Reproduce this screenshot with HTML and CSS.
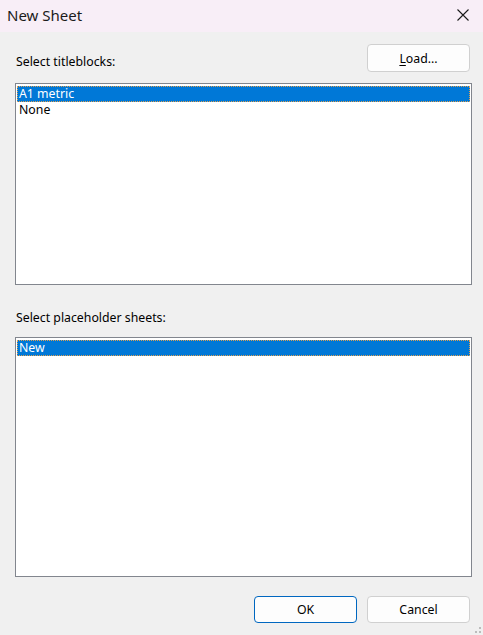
FILE: index.html
```html
<!DOCTYPE html>
<html>
<head>
<meta charset="utf-8">
<link rel="stylesheet" href="styles.css">
</head>
<body>
<div class="window">
  <div class="titlebar">
    <span class="title">New Sheet</span>
    <svg class="close" width="12" height="12" viewBox="0 0 12 12"><path d="M0.5 0.5 L11.5 11.5 M11.5 0.5 L0.5 11.5" stroke="#1a1a1a" stroke-width="1.1" fill="none"/></svg>
  </div>
  <div class="content">
    <div class="top-row">
      <span class="label">Select titleblocks:</span>
      <button class="btn load"><u>L</u>oad...</button>
    </div>
    <div class="list list-tb">
      <div class="item selected">A1 metric</div>
      <div class="item">None</div>
    </div>
    <div class="label label2">Select placeholder sheets:</div>
    <div class="list list-ph">
      <div class="item selected">New</div>
    </div>
    <div class="bottom-row">
      <button class="btn ok">OK</button>
      <button class="btn">Cancel</button>
    </div>
  </div>
  <div class="grip">
    <span class="dot d1"></span><span class="dot d2"></span><span class="dot d3"></span>
  </div>
</div>
</body>
</html>
```
FILE: styles.css
```css
html, body {
  margin: 0;
  padding: 0;
}
body {
  width: 483px;
  height: 635px;
  background: #f0f0f0;
  font-family: "Noto Sans", "Open Sans", sans-serif;
  font-size: 12.3px;
  color: #000;
  overflow: hidden;
}
.window {
  position: relative;
  height: 635px;
}
.titlebar {
  height: 32px;
  background: #f8eef7;
  display: flex;
  align-items: center;
  justify-content: space-between;
  padding: 0 14px 0 7px;
}
.title {
  font-size: 15px;
  color: #1b1b1b;
  padding-bottom: 3px;
}
.close {
  display: block;
  margin-bottom: 3px;
}
.content {
  padding: 12px 11px 0 15px;
}
.top-row {
  display: flex;
  justify-content: space-between;
  align-items: center;
  height: 28px;
}
.label {
  line-height: 16px;
  padding-top: 8px;
  padding-left: 1px;
}
.btn {
  font-family: inherit;
  font-size: 12.3px;
  color: #000;
  background: #fdfdfd;
  border: 1px solid #d0d0d0;
  border-radius: 4px;
  width: 103px;
  height: 28px;
  padding: 0;
  margin: 0;
}
.btn.load {
  margin-right: 2px;
}
.btn u {
  text-decoration: underline;
  text-underline-offset: 2px;
}
.btn.ok {
  border-color: #0067c0;
}
.list {
  background: #fff;
  border: 1px solid #82868e;
  padding: 2px 1px 1px;
  box-sizing: border-box;
}
.list-tb {
  margin-top: 11px;
  height: 202px;
}
.list-ph {
  height: 240px;
}
.item {
  height: 16px;
  line-height: 16px;
  padding-left: 2px;
}
.item.selected {
  background: #0078d7;
  color: #fff;
  outline: 1px dotted #e0a050;
  outline-offset: -1px;
}
.label2 {
  margin-top: 25px;
  margin-bottom: 11px;
  padding-top: 0;
}
.bottom-row {
  display: flex;
  justify-content: flex-end;
  gap: 10px;
  margin-top: 19px;
  padding-right: 2px;
}
.bottom-row .btn {
  height: 27px;
}
.grip {
  position: absolute;
  right: 0;
  bottom: 0;
  width: 10px;
  height: 10px;
}
.dot {
  position: absolute;
  width: 2px;
  height: 2px;
  background: #bcbcbc;
}
.d1 { left: 6px; top: 2px; }
.d2 { left: 2px; top: 6px; }
.d3 { left: 6px; top: 6px; }
```
